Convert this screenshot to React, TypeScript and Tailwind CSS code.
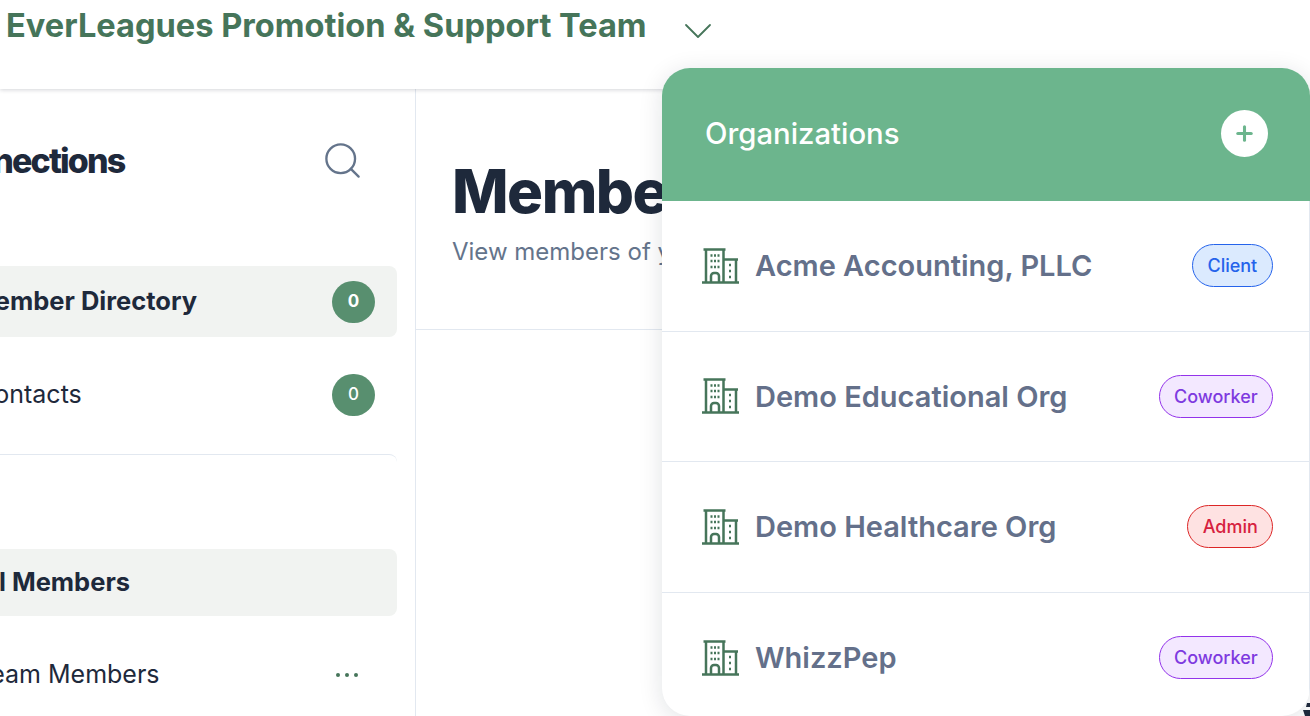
import { ChevronDown, Plus, Search } from "lucide-react";

type Org = { name: string; role: string; badge: string };

const orgs: Org[] = [
  { name: "Acme Accounting, PLLC", role: "Client", badge: "bg-[#dbeafe] border-[#2563eb] text-[#2563eb] px-[14.750px]" },
  { name: "Demo Educational Org", role: "Coworker", badge: "bg-[#f3e8ff] border-[#9333ea] text-[#7e3ae0] px-[14.250px]" },
  { name: "Demo Healthcare Org", role: "Admin", badge: "bg-[#fee2e2] border-[#dc2626] text-[#d6213f] px-[14.250px]" },
  { name: "WhizzPep", role: "Coworker", badge: "bg-[#f3e8ff] border-[#9333ea] text-[#7e3ae0] px-[14.250px]" },
];

const BuildingIcon = () => (
  <svg width="38" height="38" viewBox="0 0 38 38" fill="none" stroke="#46755a" strokeWidth="2.500" className="shrink-0">
    <path d="M0 35.500h37M1.500 2.500h22M4 3v32M21.500 3v32M21.500 12.500h14.500M34 13v22M9 35v-6a3 3 0 0 1 3-3h2a3 3 0 0 1 3 3v6" />
    <path d="M8.500 8.500h2M12 8.500h2M15.500 8.500h2M8.500 14h2M12 14h2M15.500 14h2M8.500 20h2M12 20h2M15.500 20h2M27 18h2M27 24h2M27 30h2" strokeWidth="2.600" />
  </svg>
);

const Badge = ({ count, bold }: { count: number; bold?: boolean }) => (
  <span className={"flex h-[42px] w-[43px] items-center justify-center rounded-full bg-[#588f6f] text-[17px] text-white " + (bold ? "font-bold" : "font-medium")}>
    {count}
  </span>
);

const Sidebar = () => (
  <aside className="-ml-[72px] flex h-full w-[488px] shrink-0 flex-col border-r border-[#e2e8f0] pr-[18px] text-[#1e293b]">
    <div className="flex h-[145px] shrink-0 items-center justify-between pb-[2px] pl-[2px] pr-[33px]">
      <h2 className="text-[34px] font-extrabold tracking-[-0.055em]">Connections</h2>
      <Search size={43} strokeWidth={1.3} className="text-[#64748b]" />
    </div>
    <div className="mt-[32px] flex h-[71px] shrink-0 items-center justify-between rounded-r-lg bg-[#f1f3f1] pl-[43px] pr-[22px]">
      <span className="text-[25.500px] font-bold">Member Directory</span>
      <Badge count={0} bold />
    </div>
    <div className="flex h-[117px] shrink-0 items-center justify-between pb-[1px] pl-[48px] pr-[22px]">
      <span className="text-[25px]">Contacts</span>
      <Badge count={0} />
    </div>
    <div className="h-[95px] shrink-0 rounded-t-lg border-t border-[#e2e8f0]" />
    <div className="flex h-[67px] shrink-0 items-center rounded-r-lg bg-[#f1f3f1] pl-[45px]">
      <span className="text-[25.500px] font-bold">All Members</span>
    </div>
    <div className="flex h-[118px] shrink-0 items-center justify-between pl-[48px] pr-[39px]">
      <span className="text-[25px]">Team Members</span>
      <span className="flex gap-[5px]">
        <i className="h-[4px] w-[4px] rounded-full bg-[#46755a]" />
        <i className="h-[4px] w-[4px] rounded-full bg-[#46755a]" />
        <i className="h-[4px] w-[4px] rounded-full bg-[#46755a]" />
      </span>
    </div>
  </aside>
);

const OrgDropdown = () => (
  <div className="absolute left-[662px] top-[68px] z-20 flex h-[648px] w-[648px] flex-col overflow-hidden rounded-[28px] bg-white shadow-[0_4px_24px_rgba(15,23,42,0.12)]">
    <div className="flex h-[133px] shrink-0 items-center justify-between bg-[#6cb58d] pb-[2px] pl-[43px] pr-[42px]">
      <span className="text-[29.300px] font-medium text-white">Organizations</span>
      <button className="flex h-[47px] w-[47px] items-center justify-center rounded-full bg-white">
        <Plus size={23} strokeWidth={3.200} className="text-[#6cb58d]" />
      </button>
    </div>
    {orgs.map((org) => (
      <div key={org.name} className="flex h-[130.500px] shrink-0 items-center justify-between border-b border-r border-[#e2e8f0] pl-[39.500px] pr-[36px] last:border-b-0">
        <div className="flex items-center gap-[15.500px]">
          <BuildingIcon />
          <span className="text-[29px] font-semibold text-[#64708a]">{org.name}</span>
        </div>
        <span className={"flex h-[43px] items-center rounded-full border text-[18px] font-medium " + org.badge}>
          {org.role}
        </span>
      </div>
    ))}
  </div>
);

export default function App() {
  return (
    <div className="relative flex h-[716px] w-[1310px] flex-col overflow-hidden bg-white font-['Inter',sans-serif]">
      <header className="relative z-10 flex h-[89px] shrink-0 items-start bg-white pl-[6px] pt-[3px] shadow-[0_1px_4px_rgba(15,23,42,0.18)]">
        <h1 className="text-[32.600px] font-bold leading-[44px] text-[#46755a]">EverLeagues Promotion &amp; Support Team</h1>
        <ChevronDown size={48} strokeWidth={0.9} className="ml-[27px] mt-[4px] text-[#46755a]" />
      </header>
      <div className="flex min-h-0 flex-1">
        <Sidebar />
        <main className="min-w-0 flex-1">
          <div className="h-[241px] border-b border-[#e2e8f0] pl-[36px] pt-[66px]">
            <h2 className="text-[60px] font-extrabold leading-[72px] tracking-[-0.025em] text-[#1e293b]">Members</h2>
            <p className="mt-[7px] text-[24px] text-[#64748b]">View members of your organization</p>
          </div>
        </main>
      </div>
      <OrgDropdown />
      {/* clipped bit of whatever sits under the corner */}
      <svg width="8" height="14" viewBox="0 0 8 14" className="absolute left-[1302px] top-[702px] z-30" fill="#1e293b">
        <path d="M5 1h3v4H4zM1 8h7v6H3z" />
      </svg>
    </div>
  );
}
